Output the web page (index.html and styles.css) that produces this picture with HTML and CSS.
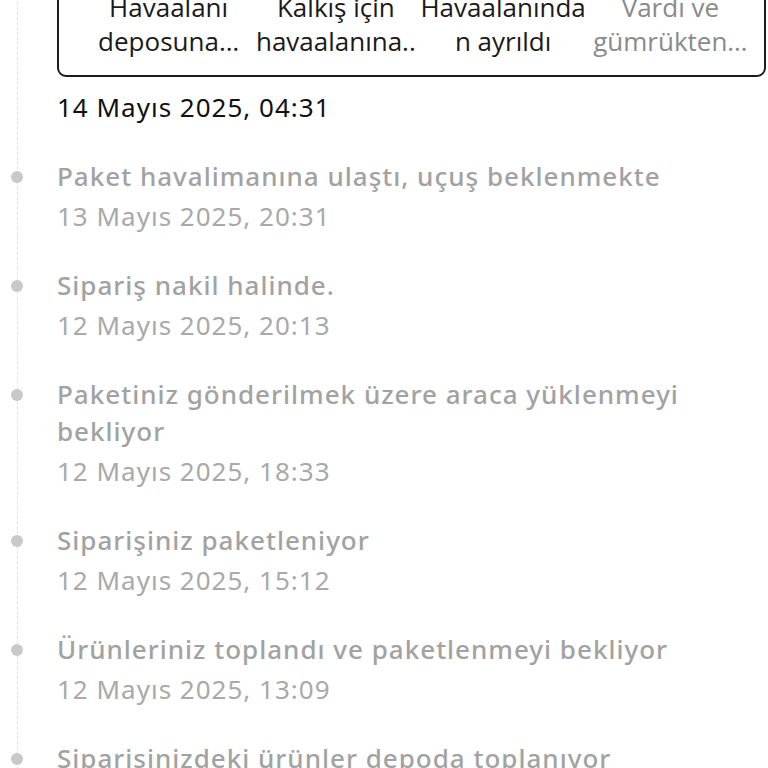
FILE: index.html
```html
<!DOCTYPE html>
<html lang="tr">
<head>
  <meta charset="UTF-8" />
  <meta name="viewport" content="width=device-width, initial-scale=1.0"/>
  <title>Kargo Takibi</title>
  <link rel="stylesheet" href="styles.css">
</head>
<body>

  <div class="tracking">
    <div class="steps-box">
      <div class="step"><span>Havaalanı</span><span>deposuna…</span></div>
      <div class="step"><span>Kalkış için</span><span>havaalanına..</span></div>
      <div class="step"><span>Havaalanında</span><span>n ayrıldı</span></div>
      <div class="step pending"><span>Vardı ve</span><span>gümrükten…</span></div>
    </div>
    <div class="current-date">14 Mayıs 2025, 04:31</div>

    <ul class="timeline">
      <li class="event">
        <div class="event-title">Paket havalimanına ulaştı, uçuş beklenmekte</div>
        <div class="event-date">13 Mayıs 2025, 20:31</div>
      </li>
      <li class="event">
        <div class="event-title">Sipariş nakil halinde.</div>
        <div class="event-date">12 Mayıs 2025, 20:13</div>
      </li>
      <li class="event">
        <div class="event-title">Paketiniz gönderilmek üzere araca yüklenmeyi bekliyor</div>
        <div class="event-date">12 Mayıs 2025, 18:33</div>
      </li>
      <li class="event">
        <div class="event-title">Siparişiniz paketleniyor</div>
        <div class="event-date">12 Mayıs 2025, 15:12</div>
      </li>
      <li class="event">
        <div class="event-title">Ürünleriniz toplandı ve paketlenmeyi bekliyor</div>
        <div class="event-date">12 Mayıs 2025, 13:09</div>
      </li>
      <li class="event">
        <div class="event-title">Siparişinizdeki ürünler depoda toplanıyor</div>
        <div class="event-date">12 Mayıs 2025, 12:40</div>
      </li>
    </ul>
  </div>

</body>
</html>
```

FILE: styles.css
```css
* {
  box-sizing: border-box;
  margin: 0;
  padding: 0;
}

body {
  font-family: "Noto Sans", Roboto, sans-serif;
  background-color: #fff;
  color: #111;
  overflow: hidden;
}

/* dashed rail runs down the left side of the whole list */
.tracking {
  margin-left: 17px;
  padding: 0 2px 0 39px;
  border-left: 1px dashed #e2e2e2;
}

.steps-box {
  margin-top: -28px;
  border: 2px solid #1c1c1c;
  border-radius: 9px;
  padding: 16px 10px 17px 26px;
  display: grid;
  grid-template-columns: repeat(4, 1fr);
  font-family: "Open Sans", Lato, sans-serif;
  font-size: 26px;
  line-height: 34px;
  text-align: center;
}

.step {
  color: #1a1a1a;
  white-space: nowrap;
}

.step span {
  display: block;
}

.step.pending {
  color: #8a8a8a;
}

.current-date {
  font-size: 26px;
  letter-spacing: 1px;
  line-height: 43px;
  margin-top: 9px;
  margin-bottom: 29px;
}

.timeline {
  list-style: none;
}

.event {
  position: relative;
  padding-bottom: 29px;
}

.event::before {
  content: "";
  position: absolute;
  left: -46px;
  top: 13px;
  width: 12px;
  height: 12px;
  border-radius: 50%;
  background-color: #c9c9c9;
}

.event-title {
  font-size: 26px;
  font-weight: 500;
  letter-spacing: 1px;
  line-height: 37px;
  color: #a2a2a2;
}

.event-date {
  font-size: 26px;
  letter-spacing: 1px;
  line-height: 43px;
  color: #a9a9a9;
}
```
